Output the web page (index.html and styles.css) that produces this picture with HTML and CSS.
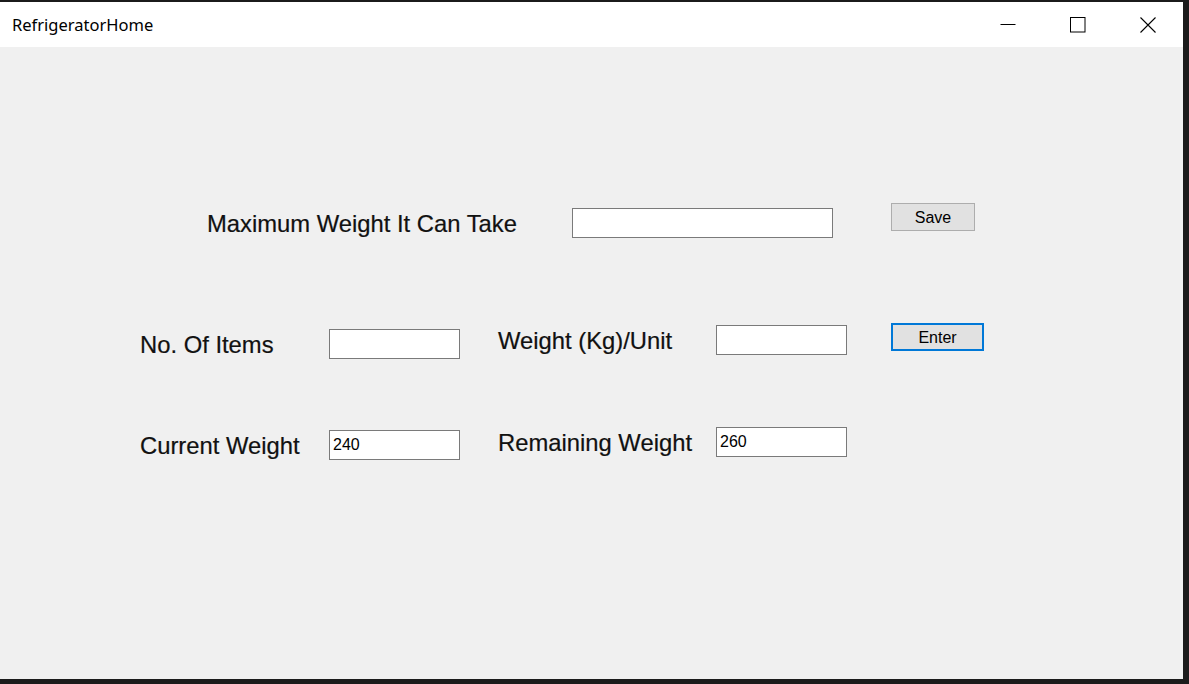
FILE: index.html
```html
<!DOCTYPE html>
<html lang="en">
<head>
<meta charset="utf-8">
<title>RefrigeratorHome</title>
<link rel="stylesheet" href="styles.css">
</head>
<body>
<div class="window">
  <div class="titlebar">
    <span class="title">RefrigeratorHome</span>
    <div class="controls">
      <div class="ctl">
        <svg width="16" height="16" viewBox="0 0 16 16"><path d="M0.5 7.5H15.5" stroke="#000" stroke-width="1" fill="none"/></svg>
      </div>
      <div class="ctl">
        <svg width="16" height="16" viewBox="0 0 16 16"><rect x="0.5" y="0.5" width="14.5" height="14.5" stroke="#000" stroke-width="1" fill="none"/></svg>
      </div>
      <div class="ctl">
        <svg width="16" height="16" viewBox="0 0 16 16"><path d="M0.5 0.5L15.5 15.5M15.5 0.5L0.5 15.5" stroke="#000" stroke-width="1.1" fill="none"/></svg>
      </div>
    </div>
  </div>
  <div class="content">
    <div class="row row1">
      <label class="lbl lbl-max">Maximum Weight It Can Take</label>
      <input class="box box-max" type="text">
      <button class="btn btn-save">Save</button>
    </div>
    <div class="row row2">
      <label class="lbl lbl-items">No. Of Items</label>
      <input class="box box-items" type="text">
      <label class="lbl lbl-unit">Weight (Kg)/Unit</label>
      <input class="box box-unit" type="text">
      <button class="btn btn-enter">Enter</button>
    </div>
    <div class="row row3">
      <label class="lbl lbl-current">Current Weight</label>
      <input class="box box-current" type="text" value="240">
      <label class="lbl lbl-remaining">Remaining Weight</label>
      <input class="box box-remaining" type="text" value="260">
    </div>
  </div>
</div>
</body>
</html>
```

FILE: styles.css
```css
html, body {
  margin: 0;
  padding: 0;
}
body {
  width: 1189px;
  height: 684px;
  overflow: hidden;
  background: #1b1b1b;
}
.window {
  width: 1183px;
  margin-top: 2px;
  background: #f0f0f0;
}
.titlebar {
  height: 45px;
  background: #ffffff;
  display: flex;
  align-items: center;
  justify-content: space-between;
}
.title {
  margin-left: 12px;
  font-family: "Noto Sans", "Open Sans", sans-serif;
  font-size: 16.5px;
  color: #000;
}
.controls {
  display: flex;
  height: 45px;
}
.ctl {
  width: 70px;
  height: 45px;
  display: flex;
  align-items: center;
  justify-content: center;
}
.content {
  height: 632px;
  padding-top: 156px;
  box-sizing: border-box;
}
.row {
  display: flex;
  align-items: flex-start;
}
.row1 { height: 34px; }
.row2 { height: 36px; margin-top: 86px; }
.row3 { height: 32px; margin-top: 68px; }

.lbl {
  font-family: "Liberation Sans", Arial, sans-serif;
  font-size: 23.8px;
  line-height: 27px;
  color: #111;
  white-space: nowrap;
  -webkit-text-stroke: 0.2px #111;
}
.box {
  box-sizing: border-box;
  height: 30px;
  margin: 0;
  border: 1px solid #7a7a7a;
  background: #ffffff;
  padding: 0 3px;
  font-family: "Liberation Sans", Arial, sans-serif;
  font-size: 16px;
  color: #000;
  outline: none;
}
.btn {
  box-sizing: border-box;
  height: 28px;
  margin: 0;
  padding: 2px 0 0;
  background: #e1e1e1;
  border: 1px solid #adadad;
  font-family: "Liberation Sans", Arial, sans-serif;
  font-size: 16px;
  color: #000;
}

.lbl-max { margin-left: 207px; width: 365px; margin-top: 7px; }
.box-max { width: 261px; margin-top: 5px; }
.btn-save { width: 84px; margin-left: 58px; }

.lbl-items { margin-left: 140px; width: 189px; margin-top: 8px; }
.box-items { width: 131px; margin-top: 6px; }
.lbl-unit { margin-left: 38px; width: 218px; margin-top: 4px; }
.box-unit { width: 131px; margin-top: 2px; }
.btn-enter { width: 93px; margin-left: 44px; border: 2px solid #0078d7; padding-top: 1px; }

.lbl-current { margin-left: 140px; width: 189px; margin-top: 5px; }
.box-current { width: 131px; margin-top: 3px; }
.lbl-remaining { margin-left: 38px; width: 218px; margin-top: 2px; }
.box-remaining { width: 131px; margin-top: 0; }
```
